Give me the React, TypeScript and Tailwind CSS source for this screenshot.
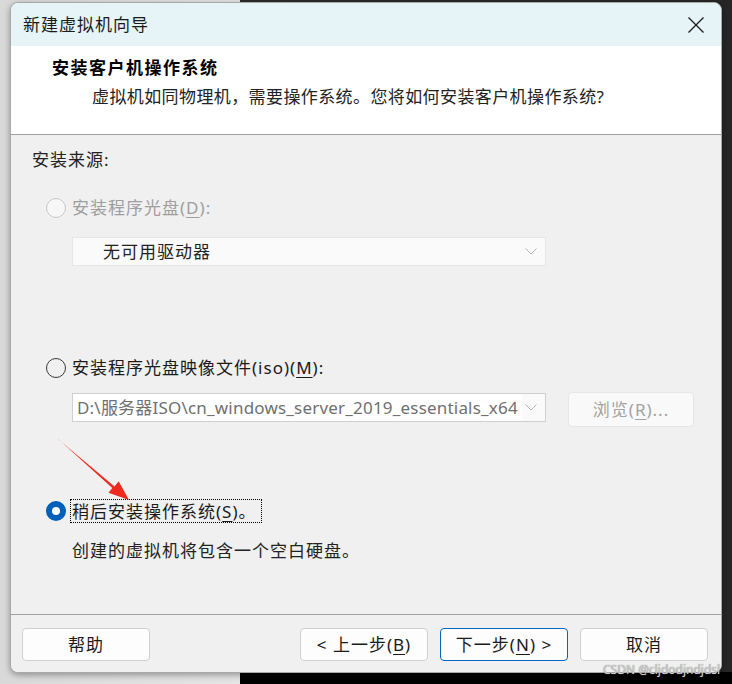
import React from "react";

const Mn = ({ c }: { c: string }) => (
  <span className="underline underline-offset-[3px] decoration-1">{c}</span>
);

const Chevron = ({ color }: { color: string }) => (
  <svg width="12" height="7" viewBox="0 0 12 7" fill="none">
    <path d="M0.5 0.5 L6 6 L11.5 0.5" stroke={color} strokeWidth="1" />
  </svg>
);

const Radio = ({ state }: { state: "disabled" | "off" | "on" }) => {
  if (state === "on") {
    return (
      <span className="flex h-[20px] w-[20px] shrink-0 items-center justify-center rounded-full bg-[#005fb8]">
        <span className="h-[8px] w-[8px] rounded-full bg-white" />
      </span>
    );
  }
  if (state === "disabled") {
    return <span className="h-[20px] w-[20px] shrink-0 rounded-full border border-[#c8c8c8] bg-[#f7f7f7]" />;
  }
  return <span className="h-[20px] w-[20px] shrink-0 rounded-full border border-[#3a3a3a] bg-[#f0f0f0]" />;
};

const FooterButton = ({
  children,
  primary,
  className = "",
}: {
  children: React.ReactNode;
  primary?: boolean;
  className?: string;
}) => (
  <button
    className={
      "flex h-[33px] w-[128px] items-center justify-center rounded-[4px] bg-[#fdfdfd] text-[17px] tracking-[1px] text-[#1a1a1a] " +
      (primary ? "border border-[#0067c0] " : "border border-[#d0d0d0] ") +
      className
    }
  >
    {children}
  </button>
);

export default function App() {
  return (
    <div className="relative h-[684px] w-[732px] overflow-hidden bg-[linear-gradient(to_right,#d9d9d9_0px,#e4e4e4_240px,#2b2b2b_240px,#262626_100%)] pl-[10px] pt-[2px] font-['Noto_Sans','Noto_Sans_CJK_SC',sans-serif]">
      <div className="absolute bottom-0 left-[240px] right-0 h-[12px] bg-black" />
      <div className="relative flex h-[671px] w-[712px] flex-col overflow-hidden rounded-[8px] border border-[#a9a9a9] bg-[#f0f0f0] shadow-[0_2px_6px_rgba(0,0,0,0.35)]">
        {/* title bar */}
        <div className="flex h-[43px] shrink-0 items-center justify-between bg-[#e6f4f7] pl-[12px] pr-[17px]">
          <span className="text-[17px] tracking-[1px] text-[#1a1a1a]">新建虚拟机向导</span>
          <svg width="16" height="16" viewBox="0 0 16 16">
            <path d="M0.5 0.5 L15.5 15.5 M15.5 0.5 L0.5 15.5" stroke="#1a1a1a" strokeWidth="1.3" />
          </svg>
        </div>

        {/* header */}
        <div className="h-[89px] shrink-0 border-b border-[#a0a0a0] bg-white pt-[10px]">
          <div className="pl-[41px] text-[17px] font-bold leading-[24px] tracking-[1.5px] text-black">
            安装客户机操作系统
          </div>
          <div className="mt-[5px] pl-[81px] text-[17px] leading-[24px] tracking-[0.4px] text-[#222]">
            虚拟机如同物理机，需要操作系统。您将如何安装客户机操作系统?
          </div>
        </div>

        {/* body */}
        <div className="flex h-[479px] shrink-0 flex-col pl-[21px] pt-[13px] text-[17px] leading-[24px] tracking-[1px]">
          <div className="text-[#222]">安装来源:</div>

          <div className="ml-[14px] mt-[24px] flex items-center gap-[6px]">
            <Radio state="disabled" />
            <span className="text-[#9e9e9e]">
              安装程序光盘(<Mn c="D" />):
            </span>
          </div>
          <div className="ml-[40px] mt-[17px] flex h-[29px] w-[474px] items-center justify-between border border-[#e6e6e6] bg-[#fafafa] pl-[30px] pr-[8px]">
            <span className="text-[#222]">无可用驱动器</span>
            <Chevron color="#b5b5b5" />
          </div>

          <div className="ml-[14px] mt-[90px] flex items-center gap-[6px]">
            <Radio state="off" />
            <span className="text-[#1a1a1a]">
              安装程序光盘映像文件(iso)(<Mn c="M" />):
            </span>
          </div>
          <div className="ml-[40px] mt-[12px] flex items-start gap-[22px]">
            <div className="mt-[1px] flex h-[29px] w-[474px] items-center justify-between border border-[#cfcfcf] bg-[#fafafa] pr-[8px]">
              <span className="h-full whitespace-nowrap bg-white pl-[4px] pr-[4px] text-[17px] leading-[27px] tracking-[0.2px] text-[#707070]">
                D:\服务器ISO\cn_windows_server_2019_essentials_x64
              </span>
              <span className="shrink-0">
                <Chevron color="#b5b5b5" />
              </span>
            </div>
            <div className="flex h-[35px] w-[126px] items-center justify-center rounded-[4px] border border-[#e6e6e6] bg-[#f9f9f9] text-[#a2a2a2]">
              浏览(<Mn c="R" />)...
            </div>
          </div>

          <div className="ml-[14px] mt-[72px] flex items-center gap-[4px]">
            <Radio state="on" />
            <span className="h-[24px] border border-dotted border-black pl-[1px] pr-[4px] text-[#1a1a1a]">
              稍后安装操作系统(<Mn c="S" />)。
            </span>
          </div>
          <div className="ml-[40px] mt-[16px] text-[#222]">创建的虚拟机将包含一个空白硬盘。</div>
        </div>

        {/* footer */}
        <div className="flex flex-1 items-start border-t border-[#a0a0a0] bg-[#f0f0f0] pl-[11px] pr-[13px] pt-[13px]">
          <FooterButton>帮助</FooterButton>
          <div className="ml-auto flex gap-[12px]">
            <FooterButton>
              &lt; 上一步(<Mn c="B" />)
            </FooterButton>
            <FooterButton primary>
              下一步(<Mn c="N" />) &gt;
            </FooterButton>
            <FooterButton>取消</FooterButton>
          </div>
        </div>
      </div>

      {/* annotation arrow */}
      <svg className="pointer-events-none absolute left-0 top-0" width="732" height="684">
        <polygon
          points="57.3,438.6 114.5,486.5 118.7,481.3 129,500 108.5,492.7 112.3,487.9 58.7,439.4"
          fill="#ee2a1f"
        />
      </svg>

      <div className="pointer-events-none absolute left-[603px] top-[661px] text-[12px] text-[#d0d0d0] [text-shadow:0_0_1px_#666]">
        CSDN @cljdodjndjdsl
      </div>
    </div>
  );
}
